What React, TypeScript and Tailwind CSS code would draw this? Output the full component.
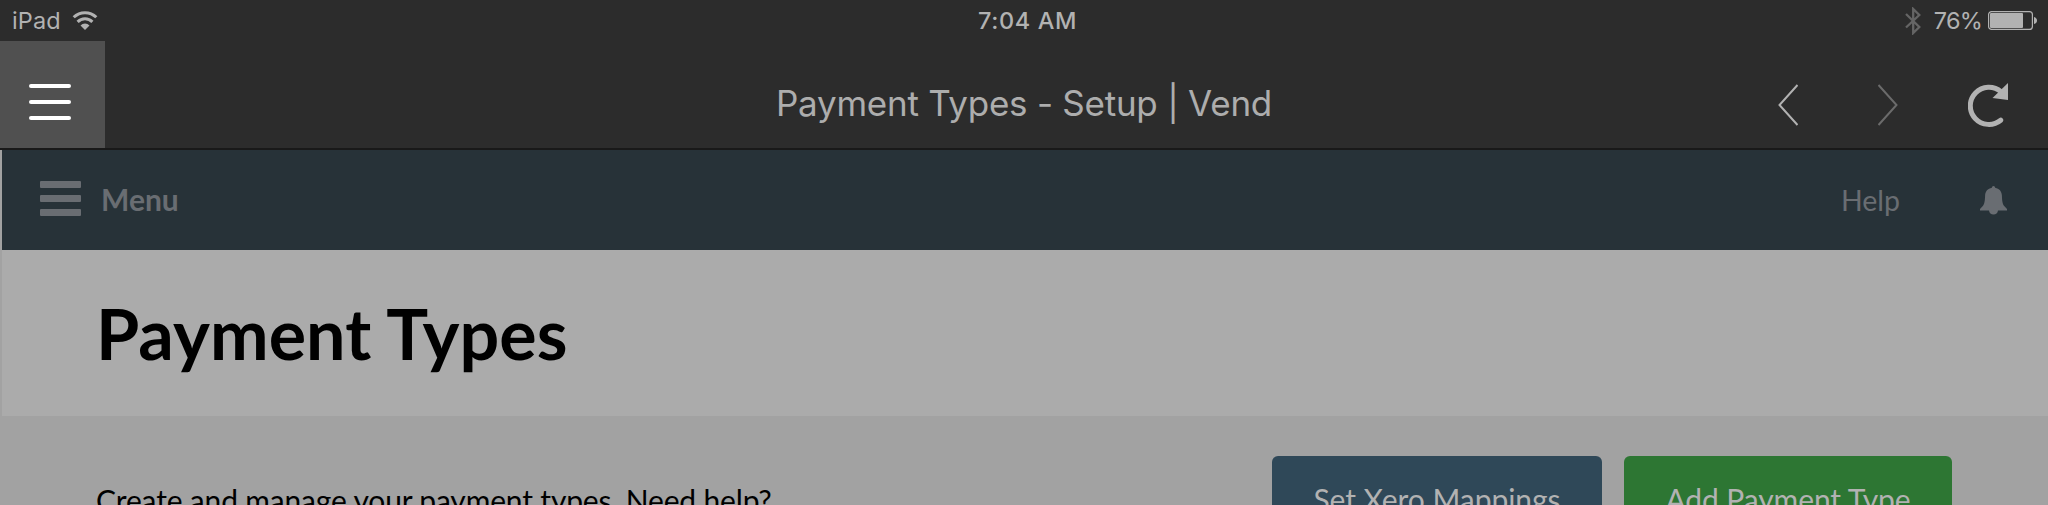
import React from "react";

function StatusBar() {
  return (
    <div className="grid h-[41px] shrink-0 grid-cols-3 items-center font-['Inter',sans-serif] text-[23.5px] leading-[41px] text-[#b2b2b2]">
      <div className="flex items-center pl-3">
        <span className="tracking-[0.1px]">iPad</span>
        <svg className="mb-[2px] ml-[11px] h-[20px] w-[26px]" viewBox="0 0 26 20" fill="none" stroke="#b2b2b2" strokeWidth="3">
          <path d="M1.7 7.3a16 16 0 0 1 22.6 0" />
          <path d="M5.6 11.9a10.4 10.4 0 0 1 14.8 0" />
          <path d="M13 20l-4.5-4.5a6.3 6.3 0 0 1 9 0z" fill="#b2b2b2" stroke="none" />
        </svg>
      </div>
      <div className="pl-[7px] text-center font-medium tracking-[0.6px]">7:04 AM</div>
      <div className="flex items-center justify-end pr-[11px]">
        <svg className="mr-[13px] h-[28px] w-[16px]" viewBox="0 0 16 28" fill="none" stroke="#656565" strokeWidth="2.3">
          <path d="M1 7l13.3 13-6.1 6V2l6.1 6L1 20.5" />
        </svg>
        <span className="mr-[6px] tracking-[-0.8px]">76%</span>
        <svg className="h-[19px] w-[49px]" viewBox="0 0 49 19">
          <rect x="0.6" y="0.6" width="43.8" height="17.8" rx="3" fill="none" stroke="#b2b2b2" strokeWidth="1.2" />
          <rect x="2" y="2" width="33" height="15" rx="1" fill="#b2b2b2" />
          <path d="M46 6q3 1 3 3.5t-3 3.5z" fill="#b2b2b2" />
        </svg>
      </div>
    </div>
  );
}

function TitleBar() {
  return (
    <header className="flex h-[107px] shrink-0 items-stretch">
      <button className="flex w-[105px] flex-col justify-center gap-3 bg-[#505050] pt-[15px] pl-[29px]">
        <span className="h-1 w-[42px] rounded-full bg-white" />
        <span className="h-1 w-[42px] rounded-full bg-white" />
        <span className="h-1 w-[42px] rounded-full bg-white" />
      </button>
      <div className="w-[165px]" />
      <h1 className="flex-1 pt-[36px] text-center font-['Inter',sans-serif] text-[35px] leading-[52px] font-normal tracking-[-0.25px] whitespace-nowrap text-[#adadad]">
        Payment Types - Setup | Vend
      </h1>
      <div className="flex w-[270px] items-start pt-[41px]">
        <svg className="mt-[2px] h-[42px] w-[20px]" viewBox="0 0 20 42" fill="none" stroke="#b2b2b2" strokeWidth="2">
          <path d="M19.5 1L1.5 21l18 20" />
        </svg>
        <svg className="mt-[2px] ml-[80px] h-[42px] w-[20px]" viewBox="0 0 20 42" fill="none" stroke="#6b6b6b" strokeWidth="2">
          <path d="M0.5 1l18 20l-18 20" />
        </svg>
        <svg className="ml-[70px] h-[46px] w-[41px]" viewBox="0 0 41 46">
          <path d="M33 9.7A18.6 18.6 0 1 0 32.7 38.2" fill="none" stroke="#b2b2b2" strokeWidth="5" strokeLinecap="round" />
          <path d="M40 1V18L24.5 16z" fill="#b2b2b2" />
        </svg>
      </div>
    </header>
  );
}

function NavBar() {
  return (
    <nav className="flex h-[100px] shrink-0 items-center bg-[#273238] pl-[38px] text-[#696d72]">
      <div className="flex flex-col gap-[7px] pb-[3px]">
        <span className="h-[7px] w-[41px] rounded-[1px] bg-[#696d72]" />
        <span className="h-[7px] w-[41px] rounded-[1px] bg-[#696d72]" />
        <span className="h-[7px] w-[41px] rounded-[1px] bg-[#696d72]" />
      </div>
      <span className="ml-[20px] pb-0.5 text-[30px] leading-[36px] font-bold">Menu</span>
      <span className="mr-[80px] ml-auto pb-px text-[28.5px] leading-[36px]">Help</span>
      <svg className="mr-[41px] h-[29px] w-[27px]" viewBox="0 0 27 29" fill="#696d72">
        <path d="M13.5 0a1.6 1.6 0 0 1 1.6 1.7c4.2.8 6.6 3.6 6.8 7.8.2 5.6.6 8.5 2.3 10.5L27 23v1.5H18c-.3 2.5-2 4-4.5 4s-4.2-1.5-4.5-4H0V23l2.8-3c1.7-2 2.1-4.9 2.3-10.5.2-4.2 2.6-7 6.8-7.8A1.6 1.6 0 0 1 13.5 0z" />
      </svg>
    </nav>
  );
}

export default function App() {
  return (
    <div className="flex h-[505px] w-full flex-col overflow-hidden bg-[#2c2c2c]">
      <StatusBar />
      <TitleBar />
      <div className="h-[2px] shrink-0 bg-[#191919]" />
      <div className="flex min-h-0 flex-1 flex-col bg-[#a2a2a2] font-['Lato',sans-serif]">
        <div className="ml-[2px] shrink-0">
          <NavBar />
          <div className="h-[166px] bg-[#ababab] pt-[41px] pl-[94px]">
            <h2 className="text-[70px] leading-[84px] font-bold tracking-[0.08px] whitespace-nowrap text-black">Payment Types</h2>
          </div>
        </div>
        <div className="flex shrink-0 items-start pt-10 pr-24 pl-24">
          <p className="mr-auto pt-[26px] text-[30px] leading-[36px] tracking-[-0.17px] whitespace-nowrap text-black">
            Create and manage your payment types. Need help?
          </p>
          <button className="mr-[22px] h-[87px] w-[330px] rounded-md bg-[#2f4858] text-[30px] tracking-[-0.05px] whitespace-nowrap text-[#b2b2b2]">
            Set Xero Mappings
          </button>
          <button className="h-[87px] w-[328px] rounded-md bg-[#2d7633] text-[30px] tracking-[-0.1px] whitespace-nowrap text-[#b2b2b2]">
            Add Payment Type
          </button>
        </div>
      </div>
    </div>
  );
}
